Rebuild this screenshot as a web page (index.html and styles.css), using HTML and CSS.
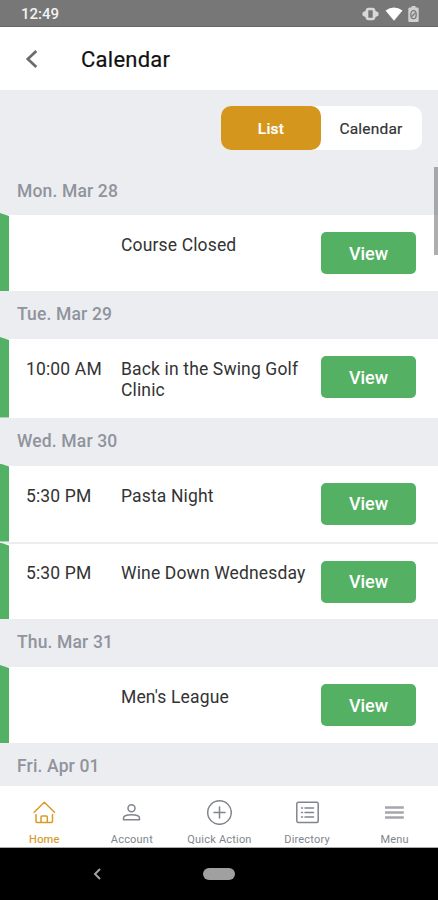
FILE: index.html
```html
<!DOCTYPE html>
<html lang="en">
<head>
<meta charset="utf-8">
<title>Calendar</title>
<link rel="stylesheet" href="styles.css">
</head>
<body>
<div class="phone">
  <div class="status">
    <span class="clock">12:49</span>
    <div class="status-icons">
      <svg width="17" height="14" viewBox="0 0 17 14"><path d="M0.500 5.500 4 3.500V10.500L0.500 8.500ZM16.500 5.500 13 3.500V10.500L16.500 8.500Z" fill="#d8d8d8"/><rect x="5" y="2" width="7" height="10" rx="1.500" fill="#777" stroke="#d8d8d8" stroke-width="2.600"/></svg>
      <svg class="wifi" width="18" height="14" viewBox="0 0 18 14"><path d="M0.500 3.500Q9-2.500 17.500 3.500L9 13.700Z" fill="#fff"/></svg>
      <svg width="11" height="16" viewBox="0 0 11 16"><path d="M3.500 0h4v1.500H9.500Q10.700 1.500 10.700 3V14.500Q10.700 16 9.500 16H1.500Q0.300 16 0.300 14.500V3Q0.300 1.500 1.500 1.500H3.500Z" fill="#d0d0d0"/><ellipse cx="5.500" cy="8.700" rx="2.700" ry="4" fill="none" stroke="#777" stroke-width="1.300"/><path d="M4 10.500 7 7" stroke="#777" stroke-width="1.200"/></svg>
    </div>
  </div>
  <header class="header">
    <svg width="14" height="20" viewBox="0 0 14 20"><path d="M12.300 1 3.800 9 12.300 17" fill="none" stroke="#6b6b6b" stroke-width="2.700"/></svg>
    <h1>Calendar</h1>
  </header>
  <main class="content">
    <div class="toggle"><button class="tab active">List</button><button class="tab">Calendar</button></div>
    <h2 class="day first">Mon. Mar 28</h2>
    <div class="event"><span class="time"></span><span class="name">Course Closed</span><button class="view">View</button></div>
    <h2 class="day">Tue. Mar 29</h2>
    <div class="event tall"><span class="time">10:00 AM</span><span class="name">Back in the Swing Golf Clinic</span><button class="view">View</button></div>
    <h2 class="day">Wed. Mar 30</h2>
    <div class="event"><span class="time">5:30 PM</span><span class="name">Pasta Night</span><button class="view">View</button></div>
    <div class="event next"><span class="time">5:30 PM</span><span class="name">Wine Down Wednesday</span><button class="view">View</button></div>
    <h2 class="day">Thu. Mar 31</h2>
    <div class="event"><span class="time"></span><span class="name">Men's League</span><button class="view">View</button></div>
    <h2 class="day">Fri. Apr 01</h2>
    <div class="scrollbar"></div>
  </main>
  <nav class="nav">
    <a class="item home"><svg viewBox="0 0 26 26"><path d="M3.200 13.300 13.300 3.300 23.500 13.300M5 15.500V22.300Q5 23.500 6.200 23.500H20.300Q21.500 23.500 21.500 22.300V15.500M10 23.500V18Q10 17 11 17H15.300Q16.300 17 16.300 18V23.500"/></svg><span>Home</span></a>
    <a class="item"><svg viewBox="0 0 26 26"><circle cx="13.500" cy="9.300" r="3.500"/><path d="M5.500 20.800V19.200C5.500 16.500 9 15.800 13.500 15.800S21.500 16.500 21.500 19.200V20.800Z"/></svg><span>Account</span></a>
    <a class="item"><svg viewBox="0 0 26 26"><circle cx="13.500" cy="13.500" r="11.800"/><path d="M8 13.500H19M13.500 8V19"/></svg><span>Quick Action</span></a>
    <a class="item"><svg viewBox="0 0 26 26"><rect x="2.800" y="3.300" width="21.400" height="20.200" rx="1.500"/><path d="M11 9H19.500M11 13.500H19.500M11 18H19.500M7.500 9H8.500M7.500 13.500H8.500M7.500 18H8.500"/></svg><span>Directory</span></a>
    <a class="item menu"><svg viewBox="0 0 26 26"><path d="M4 8.500H22.800M4 13.500H22.800M4 18.500H22.800"/></svg><span>Menu</span></a>
  </nav>
  <div class="system">
    <svg width="10" height="14" viewBox="0 0 10 14"><path d="M8 2 3 7 8 12" fill="none" stroke="#a3a3a3" stroke-width="2"/></svg>
    <span class="pill"></span>
    <span class="spacer"></span>
  </div>
</div>
</body>
</html>
```
FILE: styles.css
```css
* { box-sizing: border-box; }
body { margin: 0; font-family: Roboto, sans-serif; background: #fff; }
button { font: inherit; border: 0; padding: 0; }
h1, h2 { margin: 0; }
svg { display: block; }
.phone { width: 438px; height: 900px; display: flex; flex-direction: column; overflow: hidden; }
.status { height: 27px; flex: none; background: #777; border-bottom: 1px solid #666; display: flex; justify-content: space-between; align-items: center; padding: 2px 19px 0 21px; }
.clock { color: #f2f2f2; font-size: 15px; font-weight: 500; }
.status-icons { display: flex; align-items: center; }
.wifi { margin: 0 5px 0 6px; }
.header { height: 63px; flex: none; display: flex; align-items: center; padding: 2px 0 0 24px; gap: 43px; }
.header h1 { font-size: 22px; line-height: 26px; font-weight: 400; letter-spacing: 0.25px; color: #111; -webkit-text-stroke: 0.2px #111; }
.content { position: relative; flex: 1; min-height: 0; overflow: hidden; background: #ecedf1; padding-top: 16px; }
.toggle { width: 201px; height: 44px; margin-left: 221px; display: flex; background: #fff; border-radius: 10px; }
.tab { width: 100px; border-radius: 10px; background: transparent; color: #333; font-size: 15.500px; letter-spacing: 0.2px; font-weight: 400; -webkit-text-stroke: 0.2px; padding-top: 2px; }
.tab.active { background: #d5961d; color: #fff; font-weight: 500; }
.day { height: 48px; line-height: 47px; padding-left: 17px; color: #90949d; font-size: 17.500px; letter-spacing: 0.15px; font-weight: 500; }
.day.first { height: 65px; line-height: 82px; }
.event { position: relative; height: 76px; background: #fff; display: flex; align-items: flex-start; padding: 20px 22px 0 26px; }
.event::before { content: ""; position: absolute; left: 0; top: -2px; bottom: 0; width: 9px; background: #52b164; clip-path: polygon(0 0, 100% 3px, 100% 100%, 0 100%); }
.event.tall { height: 78.500px; }
.event.next { border-top: 2px solid #ededef; height: 77.500px; padding-top: 19px; }
.event.next::before { top: -1px; }
.time { width: 95px; flex: none; }
.name { width: 200px; flex: none; padding-right: 8px; }
.time, .name { color: #333; font-size: 17.500px; letter-spacing: 0.15px; line-height: 21px; }
.view { width: 95px; height: 42px; flex: none; margin-top: -3px; border-radius: 5px; background: #54b163; color: #fff; font-size: 18px; font-weight: 500; }
.event.next .view { margin-top: -2px; }
.scrollbar { position: absolute; top: 77px; right: 0; width: 4px; height: 88px; background: rgba(120, 120, 120, 0.6); }
.nav { height: 61.500px; flex: none; display: flex; background: #fff; border-bottom: 1px solid #aaa; }
.item { flex: 1; display: flex; flex-direction: column; align-items: center; color: #81858d; padding-top: 13px; }
.item svg { width: 26px; height: 26px; fill: none; stroke: currentColor; stroke-width: 1.500; stroke-linecap: round; stroke-linejoin: round; }
.item span { font-size: 11px; line-height: 13px; margin: 8px 0 0 1px; letter-spacing: 0.2px; white-space: nowrap; }
.item.home { color: #d79a27; }
.item.home span { -webkit-text-stroke: 0.2px; }
.item.menu svg { stroke: #a5a7ad; stroke-width: 2.500; stroke-linecap: butt; }
.system { height: 52.500px; flex: none; background: #000; display: flex; align-items: center; justify-content: space-between; padding: 0 92px; }
.pill { width: 32px; height: 12px; border-radius: 6px; background: #a0a0a0; }
.spacer { width: 10px; }
```
